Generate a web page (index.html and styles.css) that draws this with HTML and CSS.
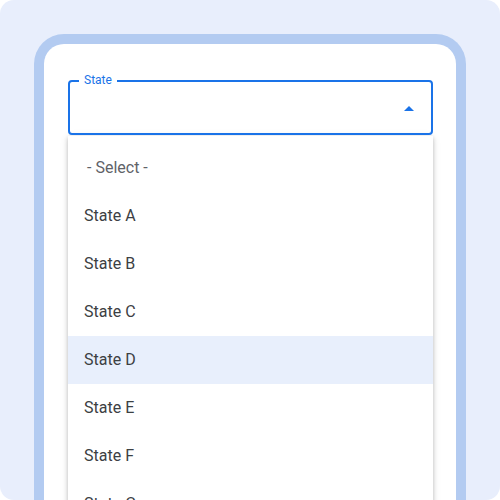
FILE: index.html
```html
<!DOCTYPE html>
<html>
<head>
<meta charset="utf-8">
<link rel="stylesheet" href="styles.css">
</head>
<body>
<div class="page">
  <div class="frame">
    <div class="field">
      <span class="label">State</span>
      <svg class="arrow" width="10" height="5" viewBox="0 0 10 5"><path d="M0 5 L5 0 L10 5 Z" fill="#1a73e8"/></svg>
    </div>
    <ul class="menu">
      <li class="item placeholder">- Select -</li>
      <li class="item">State A</li>
      <li class="item">State B</li>
      <li class="item">State C</li>
      <li class="item active">State D</li>
      <li class="item">State E</li>
      <li class="item">State F</li>
      <li class="item">State G</li>
    </ul>
  </div>
</div>
</body>
</html>
```
FILE: styles.css
```css
html, body {
  margin: 0;
  padding: 0;
  background: #ffffff;
}
.page {
  width: 500px;
  height: 500px;
  background: #e8eefc;
  border-radius: 14px;
  overflow: hidden;
  padding: 34px 34px 0;
  box-sizing: border-box;
  font-family: Roboto, "Liberation Sans", sans-serif;
}
.frame {
  background: #ffffff;
  border: 10px solid #b3cbf1;
  border-bottom: none;
  border-radius: 30px 30px 0 0;
  height: 600px;
  padding: 36px 23px 0 24px;
  box-sizing: border-box;
}
.field {
  position: relative;
  height: 55px;
  border: 2px solid #1a73e8;
  border-radius: 4px;
  box-sizing: border-box;
  display: flex;
  align-items: center;
  justify-content: flex-end;
  padding-right: 17px;
}
.label {
  position: absolute;
  left: 9px;
  top: -9px;
  background: #ffffff;
  padding: 0 5px;
  font-size: 12px;
  line-height: 14px;
  color: #1a73e8;
}
.arrow {
  display: block;
  margin-top: 1px;
}
.menu {
  list-style: none;
  margin: 1px 0 0;
  padding: 8px 0 0;
  background: #ffffff;
  box-shadow: 0 2px 4px rgba(0,0,0,0.2), 0 1px 8px rgba(0,0,0,0.12);
}
.item {
  height: 48px;
  line-height: 48px;
  padding-left: 16px;
  font-size: 16px;
  color: #3c4043;
}
.placeholder {
  color: #5f6368;
  padding-left: 19px;
}
.active {
  background: #e8effc;
}
```
